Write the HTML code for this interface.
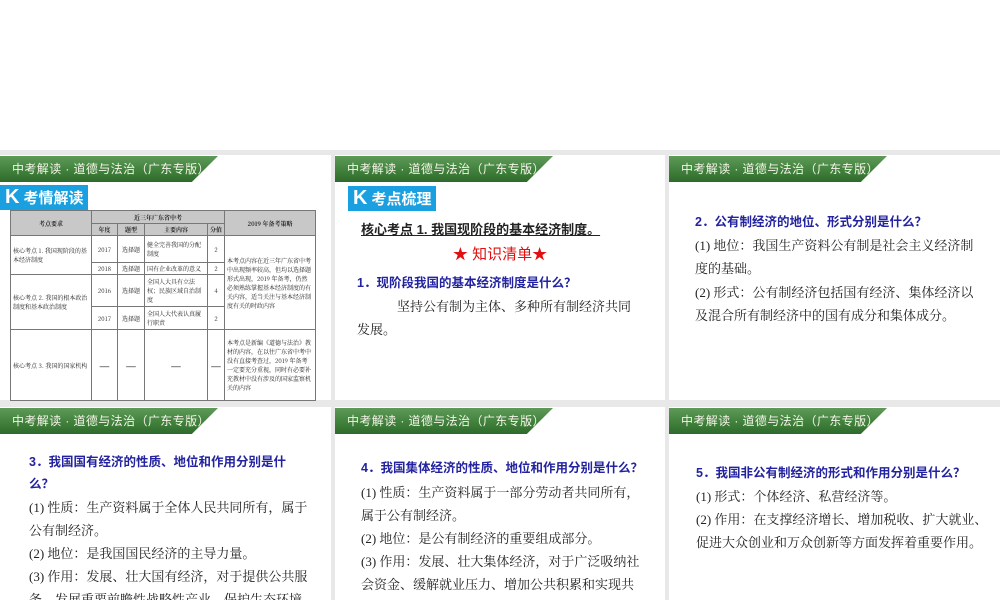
<!DOCTYPE html>
<html><head><meta charset="utf-8"><style>
*{margin:0;padding:0;box-sizing:border-box}
body{width:1000px;height:600px;position:relative;background:#e8e8e8;overflow:hidden;font-family:"Liberation Serif","Noto Serif CJK SC",serif;color:#222}
.top{position:absolute;left:0;top:0;width:1000px;height:150px;background:#fff}
.p{position:absolute;background:#fff;overflow:hidden}
.bar{position:absolute;left:0;top:1px;width:218px;height:26px;background:linear-gradient(#5e9a58,#3f7f3a 60%,#2f6a2c);clip-path:polygon(0 0,100% 0,88% 100%,0 100%);color:#f4f4e8;font:12px "Liberation Sans","Noto Sans CJK SC",sans-serif;line-height:26px;padding-left:12px;letter-spacing:0.4px}
.t{position:absolute;font-size:13px;line-height:23px;white-space:nowrap}
.h{color:#2323a0;font-weight:bold;font-family:"Liberation Sans","Noto Sans CJK SC",sans-serif;font-size:12.5px}
.k{position:absolute;background:#1aa0e0;color:#fff;font:bold 15px "Liberation Sans","Noto Sans CJK SC",sans-serif;height:25px;line-height:25px;padding:0 5px}
.k b{font-size:20px;margin-right:4px}
table{position:absolute;left:10px;top:210px;width:305px;border-collapse:collapse;table-layout:fixed;font-size:6px;line-height:9px;font-family:"Noto Serif CJK SC",serif}
td{border:1px solid #777;padding:1px 2px;vertical-align:middle}
.hd td{background:#c8c8c8;text-align:center;font-weight:bold}
.c{text-align:center}
</style></head><body>
<div class="top"></div>

<div class="p" style="left:0;top:155px;width:331px;height:245px">
<div class="bar">中考解读 · 道德与法治（广东专版）</div>
<div class="k" style="left:0;top:30px"><b>K</b>考情解读</div>
</div>
<table>
<colgroup><col style="width:81px"><col style="width:26px"><col style="width:27px"><col style="width:63px"><col style="width:17px"><col style="width:91px"></colgroup>
<tr class="hd" style="height:13px"><td rowspan="2">考点要求</td><td colspan="4">近三年广东省中考</td><td rowspan="2">2019 年备考策略</td></tr>
<tr class="hd" style="height:10px"><td>年度</td><td>题型</td><td>主要内容</td><td>分值</td></tr>
<tr style="height:27px"><td rowspan="2">核心考点 1. 我国现阶段的基本经济制度</td><td class="c">2017</td><td class="c">选择题</td><td>健全完善我国的分配制度</td><td class="c">2</td><td rowspan="4">本考点内容在近三年广东省中考中出现频率较高，但均以选择题形式出现，2019 年备考，仍然必须熟练掌握基本经济制度的有关内容，适当关注与基本经济制度有关的时政内容</td></tr>
<tr style="height:10px"><td class="c">2018</td><td class="c">选择题</td><td>国有企业改革的意义</td><td class="c">2</td></tr>
<tr style="height:32px"><td rowspan="2">核心考点 2. 我国的根本政治制度和基本政治制度</td><td class="c">2016</td><td class="c">选择题</td><td>全国人大具有立法权；民族区域自治制度</td><td class="c">4</td></tr>
<tr style="height:23px"><td class="c">2017</td><td class="c">选择题</td><td>全国人大代表认真履行职责</td><td class="c">2</td></tr>
<tr style="height:71px"><td>核心考点 3. 我国的国家机构</td><td class="c" style="font-size:12px">—</td><td class="c" style="font-size:12px">—</td><td class="c" style="font-size:12px">—</td><td class="c" style="font-size:12px">—</td><td>本考点是新编《道德与法治》教材的内容，在以往广东省中考中没有直接考查过，2019 年备考一定要充分重视，同时有必要补充教材中没有涉及的国家监察机关的内容</td></tr>
</table>

<div class="p" style="left:335px;top:155px;width:330px;height:245px">
<div class="bar">中考解读 · 道德与法治（广东专版）</div>
<div class="k" style="left:13px;top:31px"><b>K</b>考点梳理</div>
<div class="t" style="left:26px;top:63px;font-weight:bold;font-family:'Liberation Sans','Noto Sans CJK SC',sans-serif;text-decoration:underline">核心考点 1. 我国现阶段的基本经济制度。    </div>
<div class="t" style="left:0;width:330px;text-align:center;top:88px;color:#e01010;font-size:15px;font-family:'Liberation Sans','Noto Sans CJK SC',sans-serif">★ 知识清单★</div>
<div class="t h" style="left:22px;top:117px">1．现阶段我国的基本经济制度是什么？</div>
<div class="t" style="left:62px;top:140px">坚持公有制为主体、多种所有制经济共同</div>
<div class="t" style="left:22px;top:163px">发展。</div>
</div>

<div class="p" style="left:669px;top:155px;width:331px;height:245px">
<div class="bar">中考解读 · 道德与法治（广东专版）</div>
<div class="t h" style="left:26px;top:56px">2．公有制经济的地位、形式分别是什么？</div>
<div class="t" style="left:26px;top:79px">(1) 地位：我国生产资料公有制是社会主义经济制</div>
<div class="t" style="left:26px;top:102px">度的基础。</div>
<div class="t" style="left:26px;top:126px">(2) 形式：公有制经济包括国有经济、集体经济以</div>
<div class="t" style="left:26px;top:149px">及混合所有制经济中的国有成分和集体成分。</div>
</div>

<div class="p" style="left:0;top:407px;width:331px;height:193px">
<div class="bar">中考解读 · 道德与法治（广东专版）</div>
<div class="t h" style="left:29px;top:44px">3．我国国有经济的性质、地位和作用分别是什</div>
<div class="t h" style="left:29px;top:66px">么？</div>
<div class="t" style="left:29px;top:89px">(1) 性质：生产资料属于全体人民共同所有，属于</div>
<div class="t" style="left:29px;top:112px">公有制经济。</div>
<div class="t" style="left:29px;top:135px">(2) 地位：是我国国民经济的主导力量。</div>
<div class="t" style="left:29px;top:158px">(3) 作用：发展、壮大国有经济，对于提供公共服</div>
<div class="t" style="left:29px;top:181px">务、发展重要前瞻性战略性产业、保护生态环境</div>
</div>

<div class="p" style="left:335px;top:407px;width:330px;height:193px">
<div class="bar">中考解读 · 道德与法治（广东专版）</div>
<div class="t h" style="left:26px;top:50px">4．我国集体经济的性质、地位和作用分别是什么？</div>
<div class="t" style="left:26px;top:74px">(1) 性质：生产资料属于一部分劳动者共同所有，</div>
<div class="t" style="left:26px;top:97px">属于公有制经济。</div>
<div class="t" style="left:26px;top:120px">(2) 地位：是公有制经济的重要组成部分。</div>
<div class="t" style="left:26px;top:143px">(3) 作用：发展、壮大集体经济，对于广泛吸纳社</div>
<div class="t" style="left:26px;top:166px">会资金、缓解就业压力、增加公共积累和实现共</div>
</div>

<div class="p" style="left:669px;top:407px;width:331px;height:193px">
<div class="bar">中考解读 · 道德与法治（广东专版）</div>
<div class="t h" style="left:27px;top:55px">5．我国非公有制经济的形式和作用分别是什么？</div>
<div class="t" style="left:27px;top:78px">(1) 形式：个体经济、私营经济等。</div>
<div class="t" style="left:27px;top:101px">(2) 作用：在支撑经济增长、增加税收、扩大就业、</div>
<div class="t" style="left:27px;top:124px">促进大众创业和万众创新等方面发挥着重要作用。</div>
</div>
</body></html>
